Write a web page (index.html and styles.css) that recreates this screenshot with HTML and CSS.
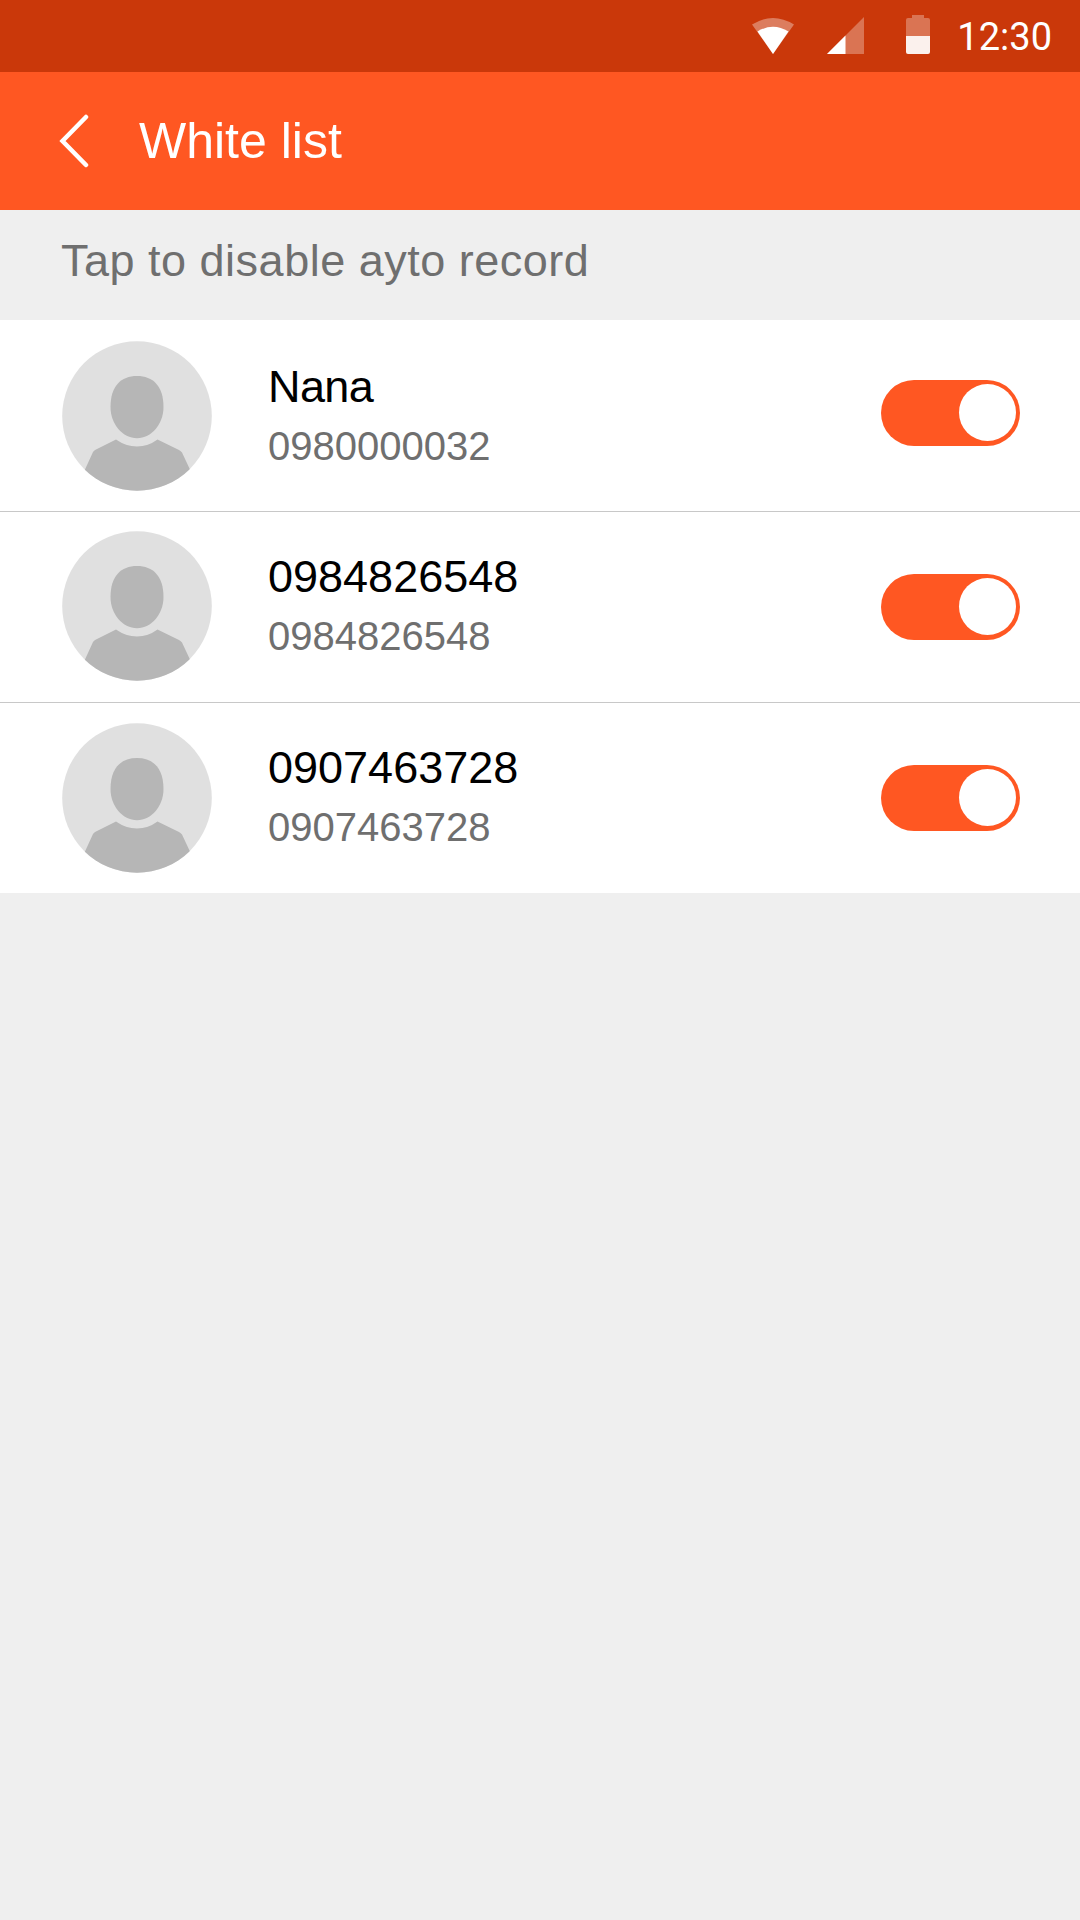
FILE: index.html
```html
<!DOCTYPE html>
<html lang="en">
<head>
  <meta charset="UTF-8" />
  <meta name="viewport" content="width=device-width, initial-scale=1.0">
  <title>White list</title>
  <link rel="stylesheet" href="styles.css">
</head>
<body>
  <!-- Shared avatar artwork -->
  <svg class="sprite" width="0" height="0">
    <symbol id="avatar" viewBox="0 0 150 150">
      <clipPath id="avatar-clip"><circle cx="75" cy="75" r="74.8" /></clipPath>
      <circle cx="75" cy="75" r="74.8" fill="#e0e0e0" />
      <path d="M75 35C91 35 101.500 45 101.500 66C101.500 83 89.500 97.200 75 97.200C60.500 97.200 48.500 83 48.500 66C48.500 45 59 35 75 35Z" fill="#b6b6b6" />
      <path clip-path="url(#avatar-clip)" d="M20 135L31 111Q32 109.500 33.500 108.800L54 98.500Q64 105.500 75 105.500Q86 105.500 95.500 98.500L117 109Q119 110 120 111.500L131 135V150H20Z" fill="#b6b6b6" />
    </symbol>
  </svg>

  <div class="status-bar">
    <svg class="status-icon wifi" width="44" height="38" viewBox="0 0 44 38">
      <path d="M1 7.500Q22 -5.500 43 7.500L22 37Z" fill="#fff" opacity=".35" />
      <path d="M6.500 14.500Q22 5 37.500 14.500L22 37Z" fill="#fff" />
    </svg>
    <svg class="status-icon signal" width="37" height="37" viewBox="0 0 37 37">
      <path d="M37 0V37H0Z" fill="#fff" opacity=".3" />
      <path d="M18.500 18.500V37H0Z" fill="#fff" />
    </svg>
    <svg class="status-icon battery" width="24" height="39" viewBox="0 0 24 39">
      <path d="M6 0H18V3H22Q24 3 24 5V21H0V5Q0 3 2 3H6Z" fill="#fff" opacity=".3" />
      <path d="M0 21H24V37Q24 39 22 39H2Q0 39 0 37Z" fill="#fff" opacity=".93" />
    </svg>
    <span class="clock">12:30</span>
  </div>

  <div class="header">
    <svg class="back" width="30" height="54" viewBox="0 0 30 54">
      <path d="M27 3L3.500 27L27 51" fill="none" stroke="#fff" stroke-width="4.500" stroke-linecap="round" />
    </svg>
    <h1>White list</h1>
  </div>

  <p class="hint">Tap to disable ayto record</p>

  <ul class="list">
    <li class="row row-first">
      <svg class="avatar"><use href="#avatar" /></svg>
      <div class="contact">
        <div class="name">Nana</div>
        <div class="number">0980000032</div>
      </div>
      <div class="toggle"><span class="knob"></span></div>
    </li>
    <li class="row">
      <svg class="avatar"><use href="#avatar" /></svg>
      <div class="contact">
        <div class="name">0984826548</div>
        <div class="number">0984826548</div>
      </div>
      <div class="toggle"><span class="knob"></span></div>
    </li>
    <li class="row row-last">
      <svg class="avatar"><use href="#avatar" /></svg>
      <div class="contact">
        <div class="name">0907463728</div>
        <div class="number">0907463728</div>
      </div>
      <div class="toggle"><span class="knob"></span></div>
    </li>
  </ul>
</body>
</html>
```
FILE: styles.css
```css
* {
  margin: 0;
  padding: 0;
  box-sizing: border-box;
}

body {
  font-family: "Liberation Sans", Arial, sans-serif;
  background: #efefef;
  min-height: 100vh;
}

.sprite {
  display: block;
}

/* Status bar */
.status-bar {
  display: flex;
  justify-content: flex-end;
  align-items: flex-start;
  height: 72px;
  padding-right: 28px;
  background: #ca380a;
}

.status-icon {
  flex: none;
}

.wifi {
  margin-top: 17px;
  margin-right: 32px;
}

.signal {
  margin-top: 17px;
  margin-right: 42px;
}

.battery {
  margin-top: 15px;
  margin-right: 24px;
}

.clock {
  width: 98px;
  margin-top: 12px;
  text-align: right;
  font-family: Roboto, sans-serif;
  font-size: 38px;
  line-height: 50px;
  color: #fff;
}

/* Header */
.header {
  display: flex;
  align-items: center;
  gap: 50px;
  height: 138px;
  padding-left: 59px;
  background: #ff5722;
}

h1 {
  font-size: 50px;
  font-weight: 400;
  line-height: 60px;
  color: #fff;
}

.hint {
  height: 110px;
  padding: 26px 61px 0;
  font-size: 45px;
  line-height: 50px;
  letter-spacing: 0.5px;
  color: #6f6f6f;
}

/* Contact rows */
.list {
  list-style: none;
}

.row {
  display: flex;
  align-items: flex-start;
  height: 191px;
  padding: 19px 60px 0 62px;
  background: #fff;
  border-bottom: 1px solid #c8c8c8;
}

.row-first {
  height: 192px;
  padding-top: 21px;
}

.row-last {
  height: 190px;
  padding-top: 20px;
  border-bottom: none;
}

.avatar {
  flex: none;
  width: 150px;
  height: 150px;
}

.contact {
  flex: 1;
  padding: 21px 0 0 56px;
}

.row-last .contact {
  padding-top: 20px;
}

.name {
  font-size: 45px;
  line-height: 50px;
  color: #000;
}

.row-first .name {
  letter-spacing: -0.6px;
}

.number {
  margin-top: 9px;
  font-size: 40px;
  line-height: 50px;
  color: #6f6f6f;
}

.toggle {
  display: flex;
  justify-content: flex-end;
  width: 139px;
  height: 66px;
  margin-top: 43px;
  padding: 4px;
  border-radius: 33px;
  background: #ff5722;
}

.row-first .toggle {
  margin-top: 39px;
}

.row-last .toggle {
  margin-top: 42px;
}

.knob {
  width: 57px;
  height: 57px;
  border-radius: 50%;
  background: #fff;
}
```
